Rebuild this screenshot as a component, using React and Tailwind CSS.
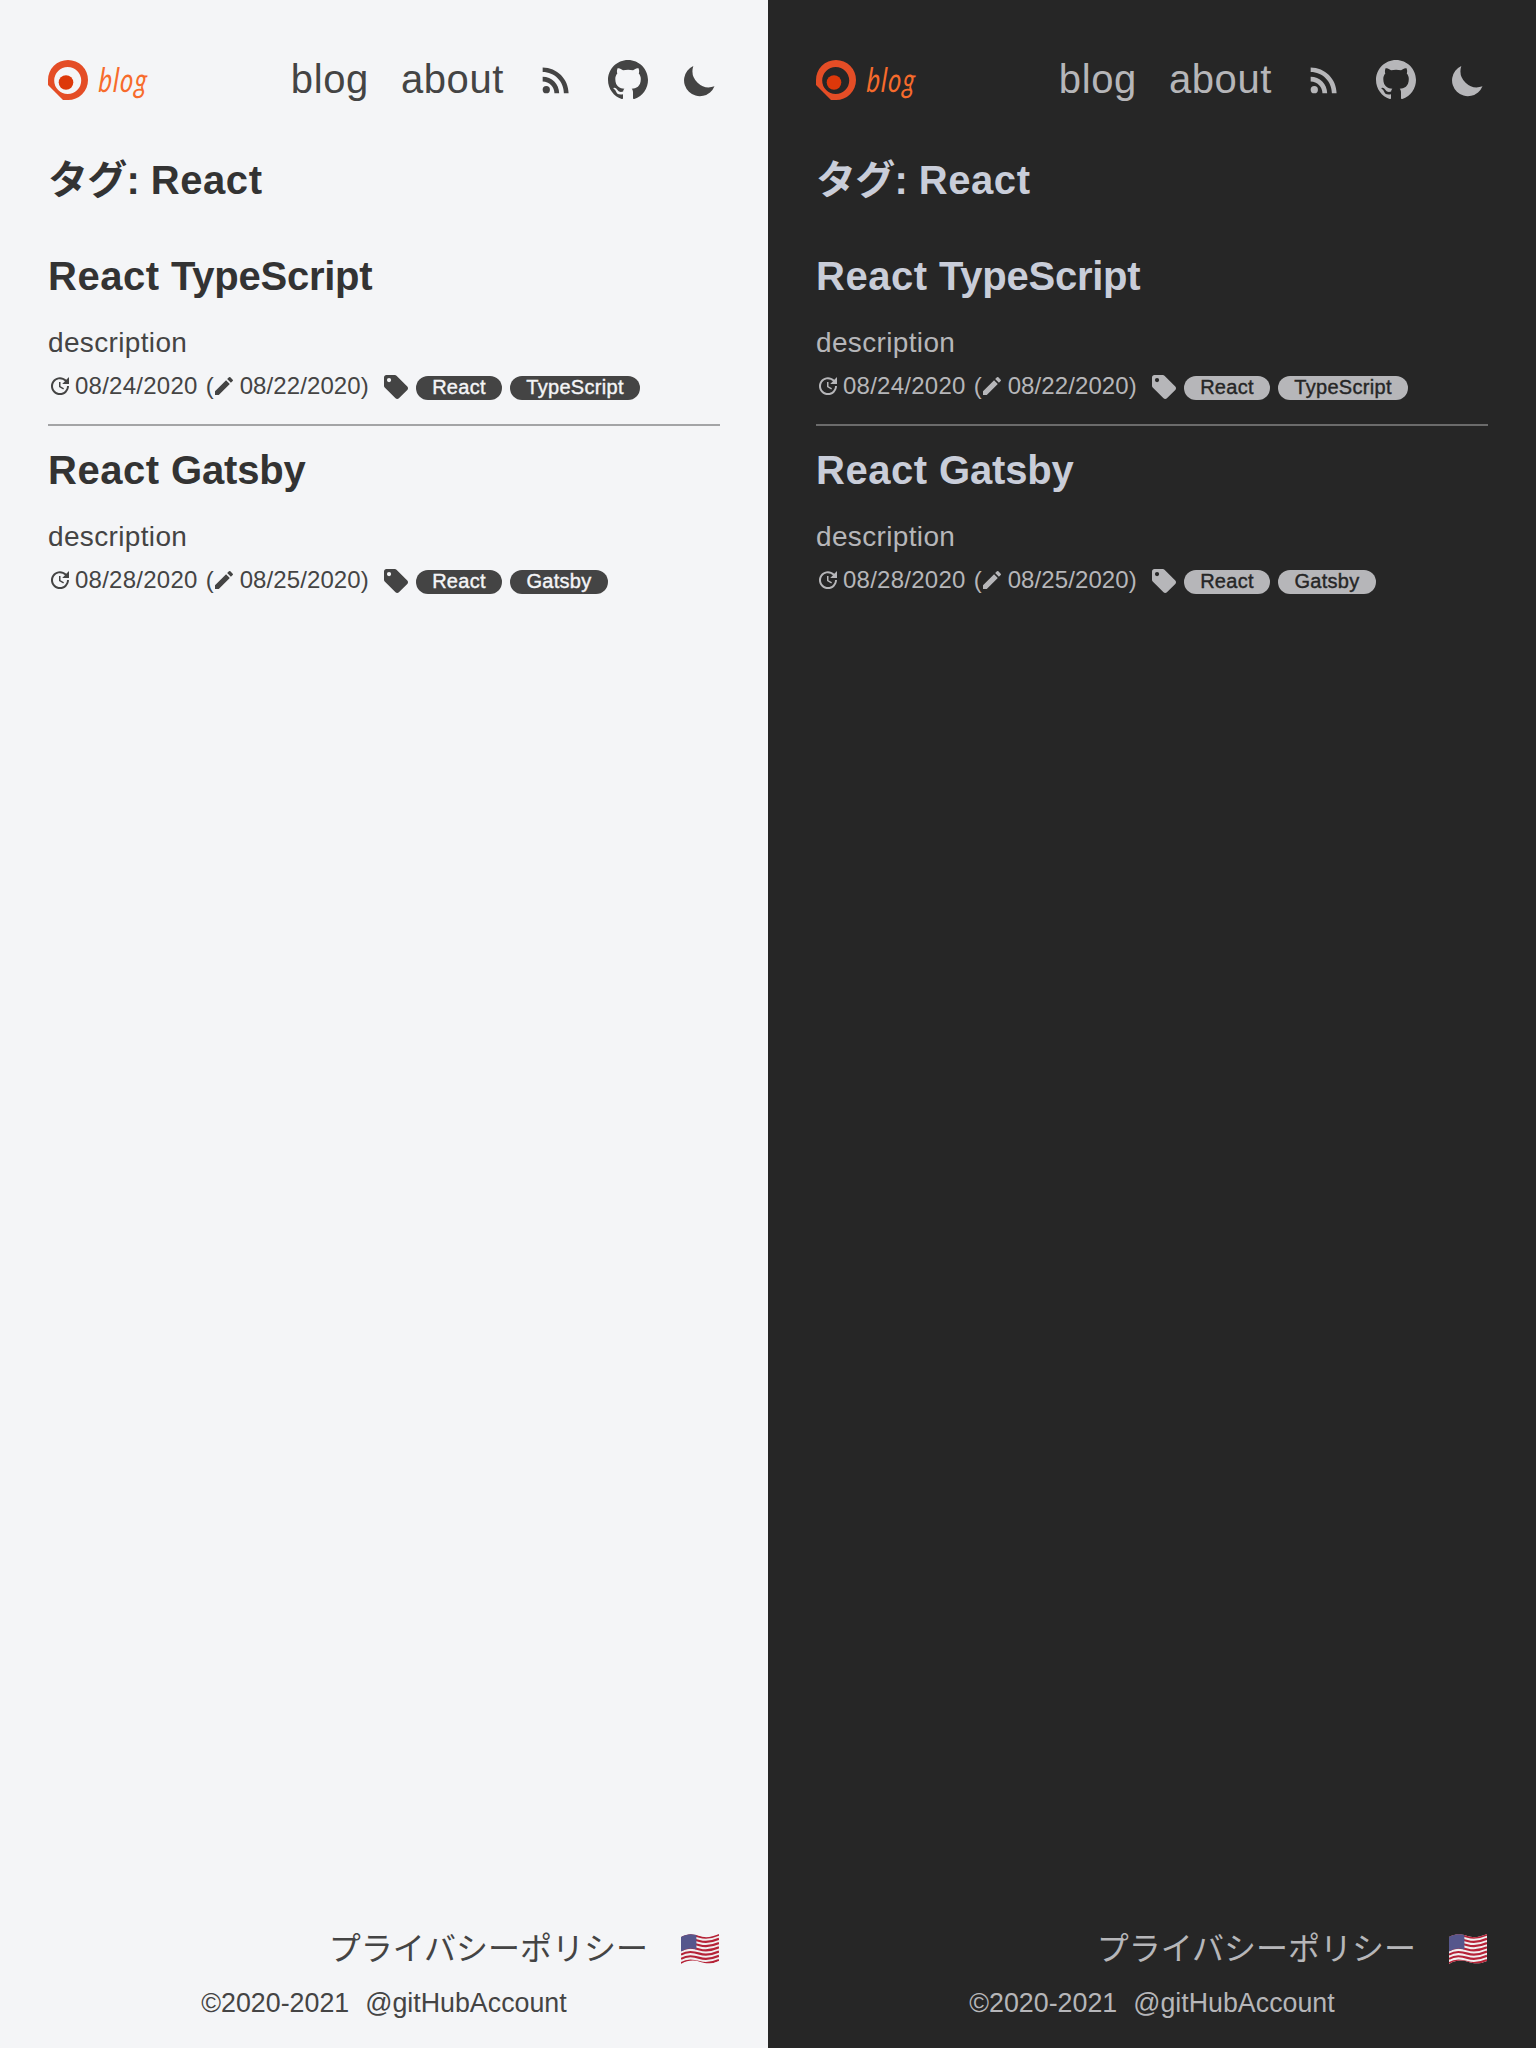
import { MdRssFeed, MdUpdate, MdEdit } from "react-icons/md";

const posts = [
  { title: ["React", "TypeScript"], updated: "08/24/2020", created: "08/22/2020", tags: ["React", "TypeScript"] },
  { title: ["React", "Gatsby"], updated: "08/28/2020", created: "08/25/2020", tags: ["React", "Gatsby"] },
];

const themes = {
  light: {
    page: "bg-[#f4f5f7] text-[#444444]",
    heading: "text-[#333333]",
    rule: "border-[#a3a4a6]",
    tag: "bg-[#444444] text-[#f4f5f7]",
  },
  dark: {
    page: "bg-[#262626] text-[#b6b6b9]",
    heading: "text-[#c9cdd9]",
    rule: "border-[#6b6b6b]",
    tag: "bg-[#b6b6b9] text-[#262626]",
  },
};

const tagWidths = { React: "w-[86px]", TypeScript: "w-[130px]", Gatsby: "w-[98px]" };
const wordTracking = { React: "tracking-[0.5px]", TypeScript: "tracking-[-0.25px]", Gatsby: "tracking-[-0.2px]" };

function Logo() {
  return (
    <div className="flex h-10 items-center">
      <svg className="size-10" viewBox="0 0 40 40">
        <path fillRule="evenodd" fill="#e44d26" d="M0 20A20 20 0 0 1 40 20A20 20 0 0 1 20 40H15L0 25ZM19.700 7a13.500 13.500 0 1 0 0 27 13.500 13.500 0 0 0 0-27Z" />
        <circle cx="18" cy="22.500" r="7.300" fill="#dd380a" />
      </svg>
      <span className="-mt-0.5 ml-[11px] origin-left -skew-x-6 scale-x-[0.740] font-['Lato',sans-serif] text-[34px] font-normal italic leading-10 tracking-[1.800px] text-[#f76b2c]">blog</span>
    </div>
  );
}

function GithubIcon() {
  return (
    <svg className="ml-8 size-10" viewBox="0 0 16 16" fill="currentColor">
      <path d="M8 0C3.58 0 0 3.58 0 8c0 3.54 2.29 6.53 5.47 7.59.4.07.55-.17.55-.38 0-.19-.01-.82-.01-1.49-2.01.37-2.53-.49-2.69-.94-.09-.23-.48-.94-.82-1.13-.28-.15-.68-.52-.01-.53.63-.01 1.08.58 1.23.82.72 1.21 1.87.87 2.33.66.07-.52.28-.87.51-1.07-1.78-.2-3.64-.89-3.64-3.95 0-.87.31-1.59.82-2.15-.08-.2-.36-1.02.08-2.12 0 0 .67-.21 2.2.82.64-.18 1.32-.27 2-.27.68 0 1.36.09 2 .27 1.53-1.04 2.2-.82 2.2-.82.44 1.1.16 1.92.08 2.12.51.56.82 1.27.82 2.15 0 3.07-1.87 3.75-3.65 3.95.29.25.54.73.54 1.48 0 1.07-.01 1.93-.01 2.2 0 .21.15.46.55.38A8.013 8.013 0 0 0 16 8c0-4.42-3.58-8-8-8z" />
    </svg>
  );
}

function MoonIcon() {
  return (
    <svg className="ml-8 size-10" viewBox="0 0 40 40" fill="currentColor">
      <path d="M13.300 6A16.400 16.400 0 0 0 34.500 26.300A15.800 15.800 0 1 1 13.300 6Z" />
    </svg>
  );
}

function TagIcon() {
  return (
    <svg className="mt-0.5 size-6 shrink-0" viewBox="2 2 20 20" fill="currentColor">
      <path d="M21.410 11.580l-9-9C12.050 2.220 11.550 2 11 2H4c-1.100 0-2 .9-2 2v7c0 .55.22 1.050.59 1.420l9 9c.36.36.86.58 1.410.58s1.050-.22 1.410-.59l7-7c.37-.36.59-.86.59-1.410s-.23-1.060-.59-1.420zM6.200 4.500a1.750 1.750 0 1 1 0 3.500 1.750 1.750 0 0 1 0-3.500z" fillRule="evenodd" />
    </svg>
  );
}

function Flag() {
  return (
    <svg className="h-[30px] w-[38px]" viewBox="0 0 37 29" preserveAspectRatio="none">
      <defs>
        <clipPath id="wave"><path d="M0 3C7-1 12 0 18 2S30 3 37 0V26C30 29 25 29 19 27S7 25 0 29Z" /></clipPath>
      </defs>
      <g clipPath="url(#wave)">
        <rect width="37" height="29" fill="#f1eeef" />
        <g fill="none" stroke="#b52237" strokeWidth="2.100">
          {[0.6, 4.7, 8.8, 12.9, 17, 21.1, 25.2].map((y) => (
            <path key={y} transform={`translate(0 ${y})`} d="M0 3C6-1 12 0 18 2S30 3 37 0" />
          ))}
        </g>
        <path fill="#56568c" d="M0 0H15V15C10 13 5 14 0 17Z" />
      </g>
    </svg>
  );
}

function Post({ post, theme }) {
  return (
    <article className="pb-1">
      <h2 className={`h-[60px] text-[40px] font-bold leading-[60px] ${theme.heading}`}>
        <span className={wordTracking[post.title[0]]}>{post.title[0]} </span>
        <span className={wordTracking[post.title[1]]}>{post.title[1]}</span>
      </h2>
      <p className="mt-4 h-[42px] text-[28px] leading-[42px] tracking-[0.350px]">description</p>
      <div className="mt-1 flex h-9 items-center text-[24px] leading-9">
        <div className="flex w-[336px] shrink-0 items-center">
          <MdUpdate className="size-6" />
          <span className="ml-[3px] tracking-[0.250px]">{post.updated}</span>
          <span className="ml-2">(</span>
          <MdEdit className="-ml-0.5 size-6" />
          <span className="ml-1 tracking-[0.100px]">{post.created})</span>
        </div>
        <TagIcon />
        {post.tags.map((tag) => (
          <span key={tag} className={`ml-2 mt-1 flex h-6 items-center justify-center rounded-full pb-0.5 text-[20px] leading-6 tracking-[0.300px] [-webkit-text-stroke:0.4px_currentColor] ${tagWidths[tag]} ${theme.tag}`}>{tag}</span>
        ))}
      </div>
    </article>
  );
}

function Page({ theme }) {
  return (
    <div className={`flex h-[2048px] w-[768px] flex-col px-12 font-['Liberation_Sans','Noto_Sans_CJK_JP',sans-serif] ${theme.page}`}>
      <header className="mt-[60px] flex h-10 items-center justify-between">
        <Logo />
        <nav className="flex items-center text-[40px] leading-10 tracking-[0.600px]">
          <span className="-mt-0.5">blog</span>
          <span className="-mt-0.5 ml-8">about</span>
          <MdRssFeed className="ml-8 size-10" />
          <GithubIcon />
          <MoonIcon />
        </nav>
      </header>
      <main>
        <h1 className={`mt-[50px] h-[60px] text-[40px] font-bold leading-[60px] ${theme.heading}`}>
          <span className="tracking-[-0.700px]">タグ: </span>
          <span className="ml-px tracking-[0.600px]">React</span>
        </h1>
        <div className="mt-9">
          <Post post={posts[0]} theme={theme} />
          <hr className={`mb-3.5 mt-4 border-t-2 ${theme.rule}`} />
          <Post post={posts[1]} theme={theme} />
        </div>
      </main>
      <footer className="mt-auto h-[123px]">
        <div className="flex h-12 items-center justify-end text-[32px] leading-[48px]">
          <span>プライバシーポリシー</span>
          <span className="ml-8 flex w-10 justify-center"><Flag /></span>
        </div>
        <div className="mt-2.5 flex h-10 items-center justify-center gap-4 text-[26.8px] leading-10">
          <span>©2020-2021</span>
          <span>@gitHubAccount</span>
        </div>
      </footer>
    </div>
  );
}

export default function App() {
  return (
    <div className="flex w-[1536px]">
      <Page theme={themes.light} />
      <Page theme={themes.dark} />
    </div>
  );
}
